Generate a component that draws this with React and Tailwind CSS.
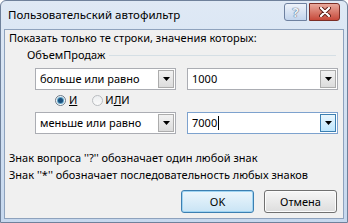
import React from 'react';

function Combo({ value, width, focused, caret }) {
  return (
    <div
      className={`h-[22px] flex items-center bg-white border ${focused ? 'border-[#7da2ce]' : 'border-[#abadb3]'}`}
      style={{ width }}
    >
      <div className="flex-1 flex items-center pl-[4px] text-[11px] leading-[16px] text-black whitespace-nowrap">
        {value}
        {caret && <span className="inline-block w-px h-[14px] bg-black ml-px"></span>}
      </div>
      <div
        className={`w-[16px] h-[18px] mr-px flex items-center justify-center border ${
          focused
            ? 'border-[#3c7fb1] bg-[linear-gradient(#eaf6fd,#bee6fd)]'
            : 'border-[#acacac] bg-[linear-gradient(#f2f2f2,#dcdcdc)]'
        }`}
      >
        <svg width="7" height="4" viewBox="0 0 7 4">
          <path d="M0 0 H7 L3.5 4 Z" fill="#000" />
        </svg>
      </div>
    </div>
  );
}

function Radio({ checked }) {
  return (
    <span
      className={`w-[11px] h-[11px] rounded-full border flex items-center justify-center ${
        checked ? 'border-[#6c7a88] bg-[linear-gradient(#e6eef5,#ffffff)]' : 'border-[#b9bcc0] bg-[linear-gradient(#eceef0,#fafafa)]'
      }`}
    >
      {checked && <span className="w-[5px] h-[5px] rounded-full bg-[#1b4f7c] shadow-[0_0_0_1px_#5fa4c8]"></span>}
    </span>
  );
}

export default function App() {
  return (
    <div className="w-[348px] h-[223px] flex flex-col bg-[linear-gradient(#dfe9f5,#c6d8ee)] border border-[#6f819b] rounded-t-[6px] font-['Noto_Sans',sans-serif] text-[11px] text-black">
      {/* title bar */}
      <div className="h-[28px] flex items-start pl-[7px] pr-[7px]">
        <span className="mt-[6px] leading-[16px] text-[11.5px]">Пользовательский автофильтр</span>
        <div className="ml-auto mt-[2px] flex">
          <div className="w-[23px] h-[18px] rounded-l-[3px] border border-[#6e81a0] bg-[linear-gradient(#eef3fa,#c2d4ec)] flex items-center justify-center">
            <span className="font-bold text-[13px] leading-[13px] text-[#eef3f9] [text-shadow:0_0_1px_#3d5576,0_0_1px_#3d5576]">?</span>
          </div>
          <div className="w-[31px] h-[18px] ml-[2px] rounded-r-[3px] border border-[#7b2e26] bg-[linear-gradient(#e9a99c,#c7493a)] flex items-center justify-center">
            <svg width="12" height="10" viewBox="0 0 12 10">
              <path d="M2 1 L10 9 M10 1 L2 9" stroke="#5a1a14" strokeWidth="4" strokeLinecap="round" />
              <path d="M2 1 L10 9 M10 1 L2 9" stroke="#fff" strokeWidth="2.2" strokeLinecap="round" />
            </svg>
          </div>
        </div>
      </div>

      {/* client area */}
      <div className="flex-1 mx-[3px] mb-[3px] bg-[#f0f0f0] border border-[#8ea2bd] flex flex-col pl-[4px] pr-[5px]">
        <div className="h-[16px] leading-[16px]">Показать только те строки, значения которых:</div>

        <div className="mt-[1px] h-[16px] flex items-center">
          <span className="ml-[18px] leading-[16px]">ОбъемПродаж</span>
          <span className="flex-1 h-px bg-[#d5dfe5] ml-[4px] mr-[2px]"></span>
        </div>

        <div className="mt-[5px] flex ml-[26px] gap-[11px]">
          <Combo value="больше или равно" width={141} />
          <Combo value="1000" width={151} />
        </div>

        <div className="mt-[2px] h-[16px] flex items-center ml-[46px]">
          <Radio checked />
          <span className="ml-[3px] leading-[16px]"><u>И</u></span>
          <span className="ml-[15px]"><Radio /></span>
          <span className="ml-[2px] leading-[16px]">И<u>Л</u>И</span>
        </div>

        <div className="mt-[4px] flex ml-[26px] gap-[11px]">
          <Combo value="меньше или равно" width={141} />
          <Combo value="7000" width={151} focused caret />
        </div>

        <div className="mt-[16px] h-[16px] leading-[16px]">Знак вопроса ''?'' обозначает один любой знак</div>
        <div className="mt-[1px] h-[16px] leading-[16px]">Знак ''*'' обозначает последовательность любых знаков</div>

        <div className="mt-[7px] flex justify-end gap-[10px] pr-[1px]">
          <button className="w-[73px] h-[23px] rounded-[3px] border border-[#3c7fb1] bg-[linear-gradient(#ecf6fc,#c9e4f5)] shadow-[inset_0_0_0_1px_#9fd4f2] text-[11px] leading-[16px]">
            OK
          </button>
          <button className="w-[73px] h-[23px] rounded-[3px] border border-[#707070] bg-[linear-gradient(#f6f6f6,#dddddd)] shadow-[inset_0_0_0_1px_#fcfcfc] text-[11px] leading-[16px]">
            Отмена
          </button>
        </div>
      </div>
    </div>
  );
}
